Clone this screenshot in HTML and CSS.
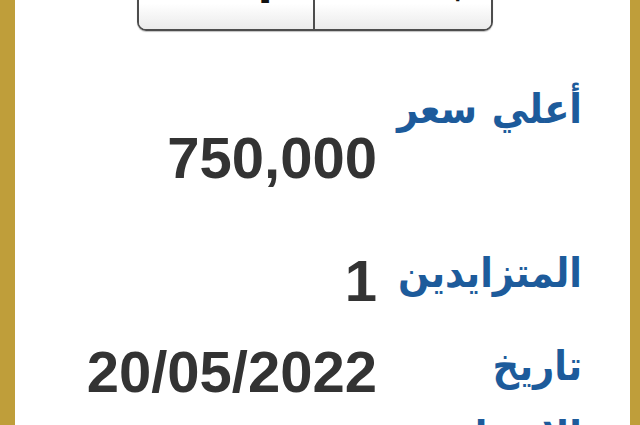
FILE: index.html
```html
<!DOCTYPE html>
<html lang="ar">
<head>
<meta charset="utf-8">
<title>تفاصيل المزاد</title>
<link rel="stylesheet" href="styles.css">
</head>
<body>
<div class="panel">
  <div class="toolbar">
    <div class="btn-group">
      <button class="btn btn-left" type="button">١</button>
      <button class="btn btn-right" type="button">ب</button>
    </div>
  </div>
  <dl class="details">
    <div class="row row-first">
      <dt class="label">أعلي سعر</dt>
      <dd class="value value-low">750,000</dd>
    </div>
    <div class="row row-second">
      <dt class="label">المتزايدين</dt>
      <dd class="value value-mid">1</dd>
    </div>
    <div class="row row-third">
      <dt class="label">تاريخ<br>الانتهاء</dt>
      <dd class="value value-high">20/05/2022</dd>
    </div>
  </dl>
</div>
</body>
</html>
```

FILE: styles.css
```css
html, body {
  margin: 0;
  padding: 0;
  background: #ffffff;
}

.panel {
  box-sizing: border-box;
  width: 640px;
  height: 425px;
  overflow: hidden;
  background: #ffffff;
  border-left: 15px solid #bf9e3a;
  border-right: 10px solid #bf9e3a;
}

.toolbar {
  display: flex;
  padding-left: 122px;
  margin-top: -30px;
}

.btn-group {
  display: flex;
  width: 356px;
  height: 61px;
  box-sizing: border-box;
  border: 2px solid #4d4d4d;
  border-radius: 9px;
  overflow: hidden;
  box-shadow: 0 1px 1px rgba(0, 0, 0, 0.25);
}

.btn {
  box-sizing: border-box;
  flex: none;
  width: 50%;
  margin: 0;
  border: 0;
  padding: 0;
  display: flex;
  align-items: flex-end;
  background: linear-gradient(#ffffff 0%, #ffffff 55%, #ebebeb 100%);
  font-family: "DejaVu Sans", sans-serif;
  font-weight: bold;
  font-size: 44px;
  line-height: 1;
  color: #111111;
}

.btn-left {
  border-right: 2px solid #4d4d4d;
  justify-content: flex-start;
  padding-left: 111px;
  padding-bottom: 19px;
}

.btn-right {
  justify-content: flex-end;
  padding-right: 10px;
  padding-bottom: 27px;
}

.details {
  margin: 0;
  padding: 0 48px 0 0;
  direction: rtl;
}

.row {
  display: flex;
  align-items: flex-start;
}

.row-first { margin-top: 43px; }
.row-second { margin-top: 45px; }
.row-third { margin-top: 15px; }

.label {
  width: 205px;
  flex: none;
  margin: 0;
  font-family: "DejaVu Sans Condensed", "DejaVu Sans", sans-serif;
  font-weight: bold;
  font-size: 41px;
  line-height: 70px;
  word-spacing: 2px;
  white-space: nowrap;
  color: #1d5b9b;
  text-align: right;
}

.value {
  margin: 0;
  font-family: "Liberation Sans", Arial, sans-serif;
  font-weight: bold;
  font-size: 58px;
  line-height: 70px;
  color: #333333;
  direction: ltr;
}

.value-low { margin-top: 49px; }
.value-mid { margin-top: 8px; }
.value-high { margin-top: 6px; }
```
